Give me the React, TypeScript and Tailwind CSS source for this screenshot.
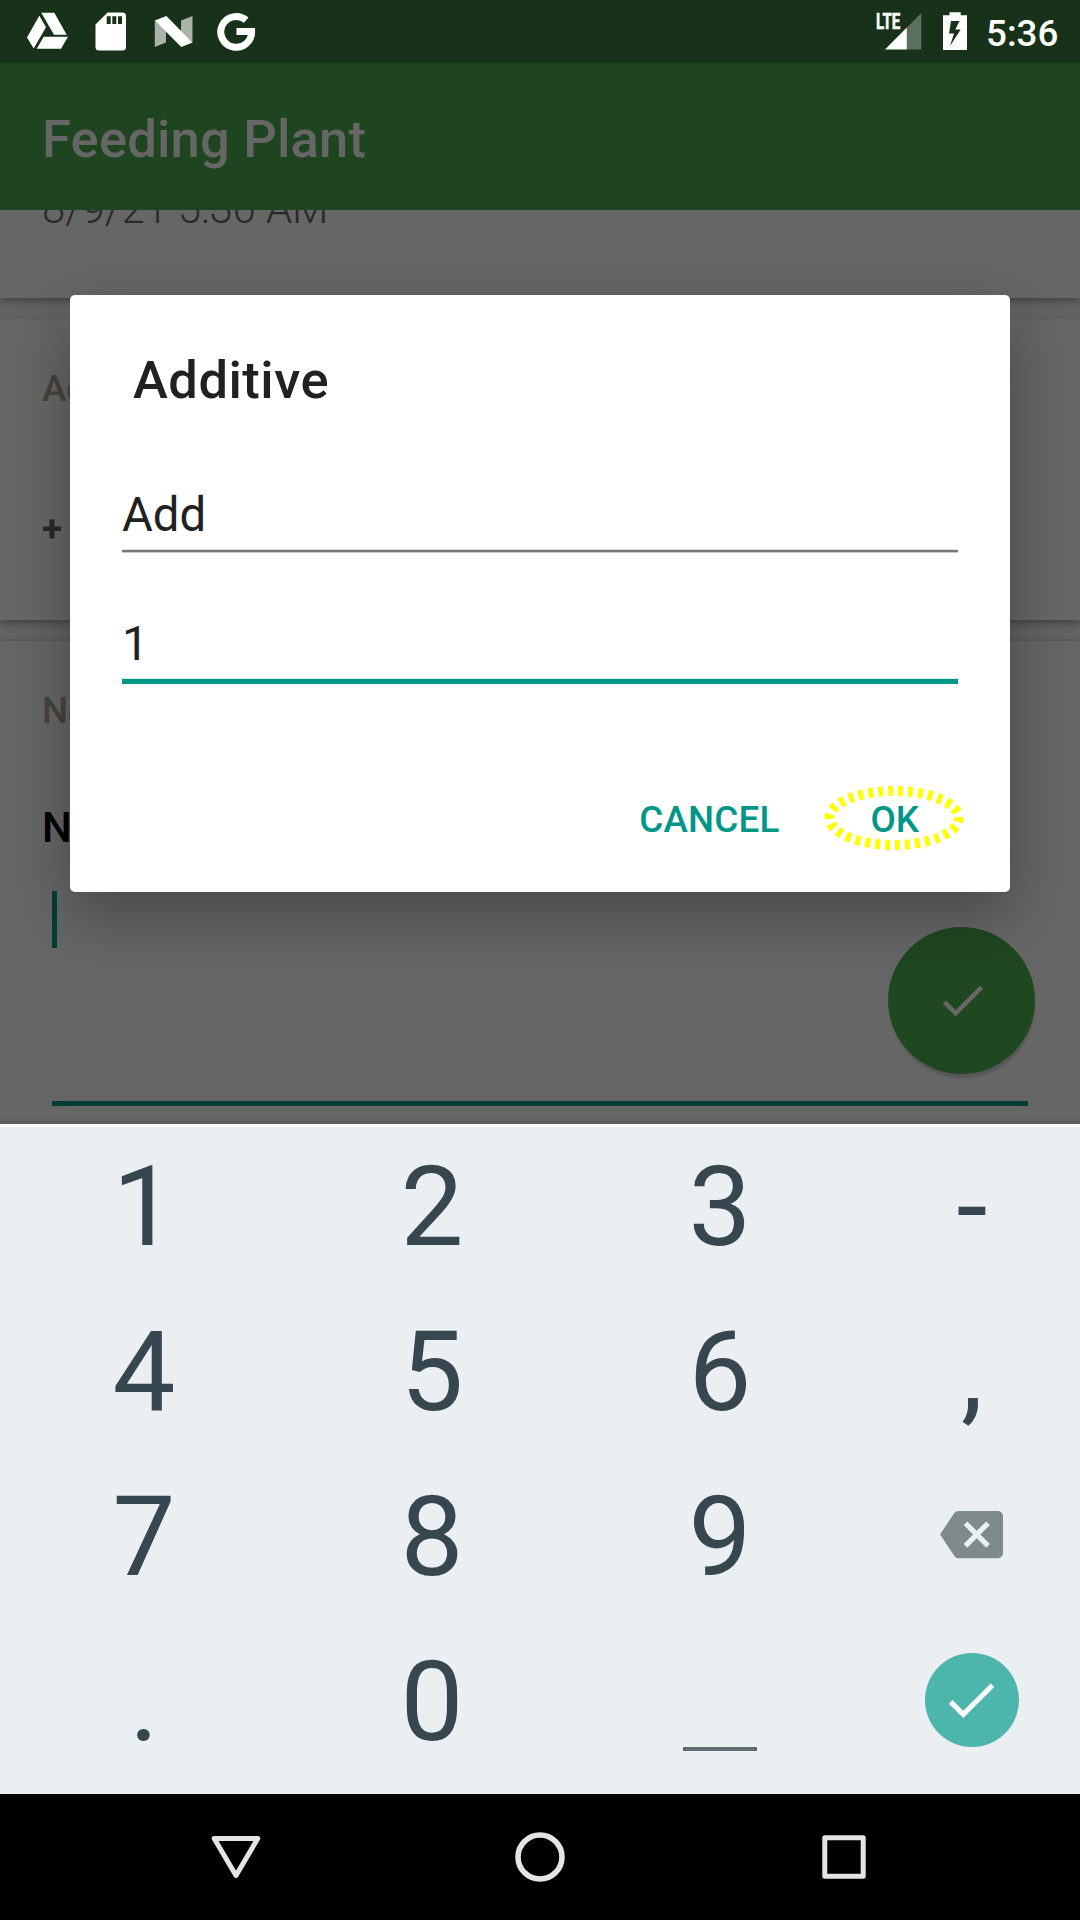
import React from "react";

const CHECK = "M9 16.17 4.83 12l-1.42 1.41L9 19 21 7l-1.41-1.41z";

function StatusBar() {
  return (
    <header className="flex h-[63px] shrink-0 items-start bg-[#183219] text-white">
      <svg width="270" height="63" viewBox="0 0 270 63" fill="currentColor">
        <path d="M27 37.5 39.3 15.7 46 27.3 33.7 48.5zM41.3 12.7H54.3L66.7 34.7H54zM43.7 36.8H68L61 48.8H36.7z" />
        <path
          fillRule="evenodd"
          d="M107.5 12.5H122.5Q126 12.5 126 16V47Q126 50.5 122.5 50.5H99Q95.5 50.5 95.5 47V24.5zM106.7 16.3V24H110.7V16.3zM112.3 16.3V24H116.3V16.3zM118 16.3V24H122V16.3z"
        />
        <path opacity=".63" d="M154.8 20.5 166 31V42.5L154.8 47zM181 20.5 192.5 16V42.5L181 31.5z" />
        <path d="M154.8 20.5 166.3 16 192.5 42.5 181.3 47z" />
        <path
          d="M246.2 20.2A15.4 15.4 0 1 0 251.6 31.6H236.5"
          fill="none"
          stroke="currentColor"
          strokeWidth="7"
        />
      </svg>
      <svg className="ml-auto" width="210" height="63" viewBox="870 0 210 63" fill="currentColor">
        <text
          x="875.9"
          y="29"
          fontFamily="Roboto, sans-serif"
          fontWeight="700"
          fontSize="22"
          stroke="currentColor"
          strokeWidth="0.5"
          textLength="24.5"
          lengthAdjust="spacingAndGlyphs"
        >
          LTE
        </text>
        <path opacity=".3" d="M906.5 28 921.3 13V49.5H906.5z" />
        <path d="M885 49.5 906.8 27.5V49.5z" />
        <path
          fillRule="evenodd"
          d="M949.5 12.3H960.7V15.3H967V50H943V15.3H949.5zM951 21 949 33.5H954L950 46 960.7 29.5H955.3L959.5 21z"
        />
        <text x="986" y="46" fontFamily="Roboto, sans-serif" fontWeight="500" fontSize="36.75">
          5:36
        </text>
      </svg>
    </header>
  );
}

function Content() {
  return (
    <main className="relative h-[914px] shrink-0 overflow-hidden bg-[#646464]">
      <section className="flex h-[88px] items-start bg-[#666] shadow-[0_3px_8px_rgba(0,0,0,0.35)]">
        <p className="-mt-[26px] pl-[42px] text-[42px] leading-[50px] font-light tracking-[-0.15px] text-[#292929]">
          8/9/21 5:30 AM
        </p>
      </section>
      <section className="mt-[21px] h-[301px] bg-[#666] px-[42px] pt-[48px] text-[36.75px] leading-[44px] shadow-[0_3px_8px_rgba(0,0,0,0.35)]">
        <h2 className="font-medium text-[#47433d]">Ad</h2>
        <p className="mt-[96px] font-bold text-[#292929]">+</p>
      </section>
      <section className="mt-[21px] h-[483px] bg-[#666] px-[42px] pt-[48px] shadow-[0_0_5px_rgba(0,0,0,0.3)]">
        <h2 className="text-[36.75px] leading-[44px] font-medium text-[#47433d]">No</h2>
        <p className="mt-[70px] text-[42px] leading-[50px] font-medium text-black">N</p>
        <div className="mt-[38px] ml-[10px] h-[57px] w-[5px] bg-[#003d37]" />
        <div className="mt-[153px] ml-[10px] h-[5px] w-[976px] bg-[#003d37]" />
      </section>
      <button className="absolute right-[45px] bottom-[50px] flex size-[147px] items-center justify-center rounded-full bg-[#1f4720] text-[#666] shadow-[1px_5px_2px_-1px_rgba(0,0,0,0.15)]">
        <svg className="ml-[2px]" width="55" height="55" viewBox="0 0 24 24" fill="currentColor">
          <path d={CHECK} />
        </svg>
      </button>
      <div className="absolute inset-x-0 bottom-0 h-2 bg-gradient-to-b from-transparent to-black/10" />
      <Dialog />
    </main>
  );
}

function Dialog() {
  return (
    <div className="absolute top-[85px] left-[70px] h-[597px] w-[940px] rounded-[5px] bg-white px-[52px] pt-[54px] text-[#212121] shadow-[0_22px_60px_rgba(0,0,0,0.3)]">
      <h1 className="pl-[11px] text-[52.5px] leading-[62px] font-medium tracking-[0.5px]">Additive</h1>
      <p className="mt-[76px] text-[47.25px] leading-[56px]">Add</p>
      <div className="mt-[6px] h-1 border-t border-b border-t-[#dedede] border-b-[#c8c8c8] bg-[#777]" />
      <p className="mt-[63px] text-[47.25px] leading-[56px]">1</p>
      <div className="mt-[6px] h-[6px] border-t border-t-[#d5eeeb] bg-[#009688]" />
      <div className="mt-[114px] flex justify-end pr-[39px] text-[36.75px] leading-[44px] font-medium text-[#009688]">
        <button className="tracking-[0.2px]">CANCEL</button>
        <button className="relative ml-[91px]">
          OK
          <svg
            className="absolute top-1/2 left-1/2 -mt-px -ml-px -translate-x-1/2 -translate-y-1/2"
            width="142"
            height="68"
            viewBox="0 0 142 68"
          >
            <ellipse
              cx="71"
              cy="33"
              rx="64.5"
              ry="27"
              fill="none"
              stroke="#ffff00"
              strokeWidth="10"
              pathLength="300"
              strokeDasharray="5 5"
              strokeDashoffset="1"
            />
          </svg>
        </button>
      </div>
    </div>
  );
}

const KEYS = ["1", "2", "3", "-", "4", "5", "6", ",", "7", "8", "9", "back", ".", "0", "space", "done"];

function Key({ name }: { name: string }) {
  if (name === "back") {
    return (
      <svg className="mt-[46px] mr-[2px]" width="63" height="63" viewBox="0 0 24 24" fill="#7f8a8d">
        <path d="M22 3H7c-.69 0-1.23.35-1.59.88L0 12l5.41 8.11c.36.53.9.89 1.59.89h15c1.1 0 2-.9 2-2V5c0-1.1-.9-2-2-2zm-3 12.59L17.59 17 14 13.41 10.41 17 9 15.59 12.59 12 9 8.41 10.41 7 14 10.59 17.59 7 19 8.41 15.41 12 19 15.59z" />
      </svg>
    );
  }
  if (name === "space") return <div className="mt-[125px] h-[4px] w-[74px] bg-[#5f6c70]" />;
  if (name === "done") {
    return (
      <div className="mt-[31px] mr-px flex size-[94px] items-center justify-center rounded-full bg-[#4db6ac] text-white">
        <svg className="mr-px" width="62" height="62" viewBox="0 0 24 24" fill="currentColor">
          <path d={CHECK} />
        </svg>
      </div>
    );
  }
  return <span>{name}</span>;
}

function Keyboard() {
  return (
    <div className="grid h-[670px] shrink-0 auto-rows-[165px] grid-cols-[288px_288px_288px_216px] border-t-[3px] border-[#fafafa] bg-[#ebeff2] text-[112px] leading-[159px] text-[#37474f]">
      {KEYS.map((k) => (
        <div key={k} className="flex items-start justify-center">
          <Key name={k} />
        </div>
      ))}
    </div>
  );
}

function NavBar() {
  return (
    <nav className="flex h-[126px] shrink-0 items-center justify-center gap-[248px] bg-black text-[#e4e4e4]">
      <svg width="56" height="56" viewBox="0 0 56 56" fill="none" stroke="currentColor" strokeWidth="5" strokeLinejoin="round">
        <path d="M6.2 9.5H49.8L28 46.5z" />
      </svg>
      <svg width="56" height="56" viewBox="0 0 56 56" fill="none" stroke="currentColor" strokeWidth="5.6">
        <circle cx="28" cy="28" r="22" />
      </svg>
      <svg width="56" height="56" viewBox="0 0 56 56" fill="none" stroke="currentColor" strokeWidth="5" strokeLinejoin="round">
        <path d="M8.8 8.8H47.2V47.2H8.8z" />
      </svg>
    </nav>
  );
}

export default function App() {
  return (
    <div className="flex h-[1920px] w-[1080px] flex-col overflow-hidden bg-black font-['Roboto',sans-serif]">
      <StatusBar />
      <div className="relative z-10 flex h-[147px] shrink-0 items-center bg-[#1f4420] pl-[42px] text-[52.5px] leading-[62px] font-medium tracking-[0.2px] text-[#666]">
        <span className="pt-[4px]">Feeding Plant</span>
      </div>
      <Content />
      <Keyboard />
      <NavBar />
    </div>
  );
}
